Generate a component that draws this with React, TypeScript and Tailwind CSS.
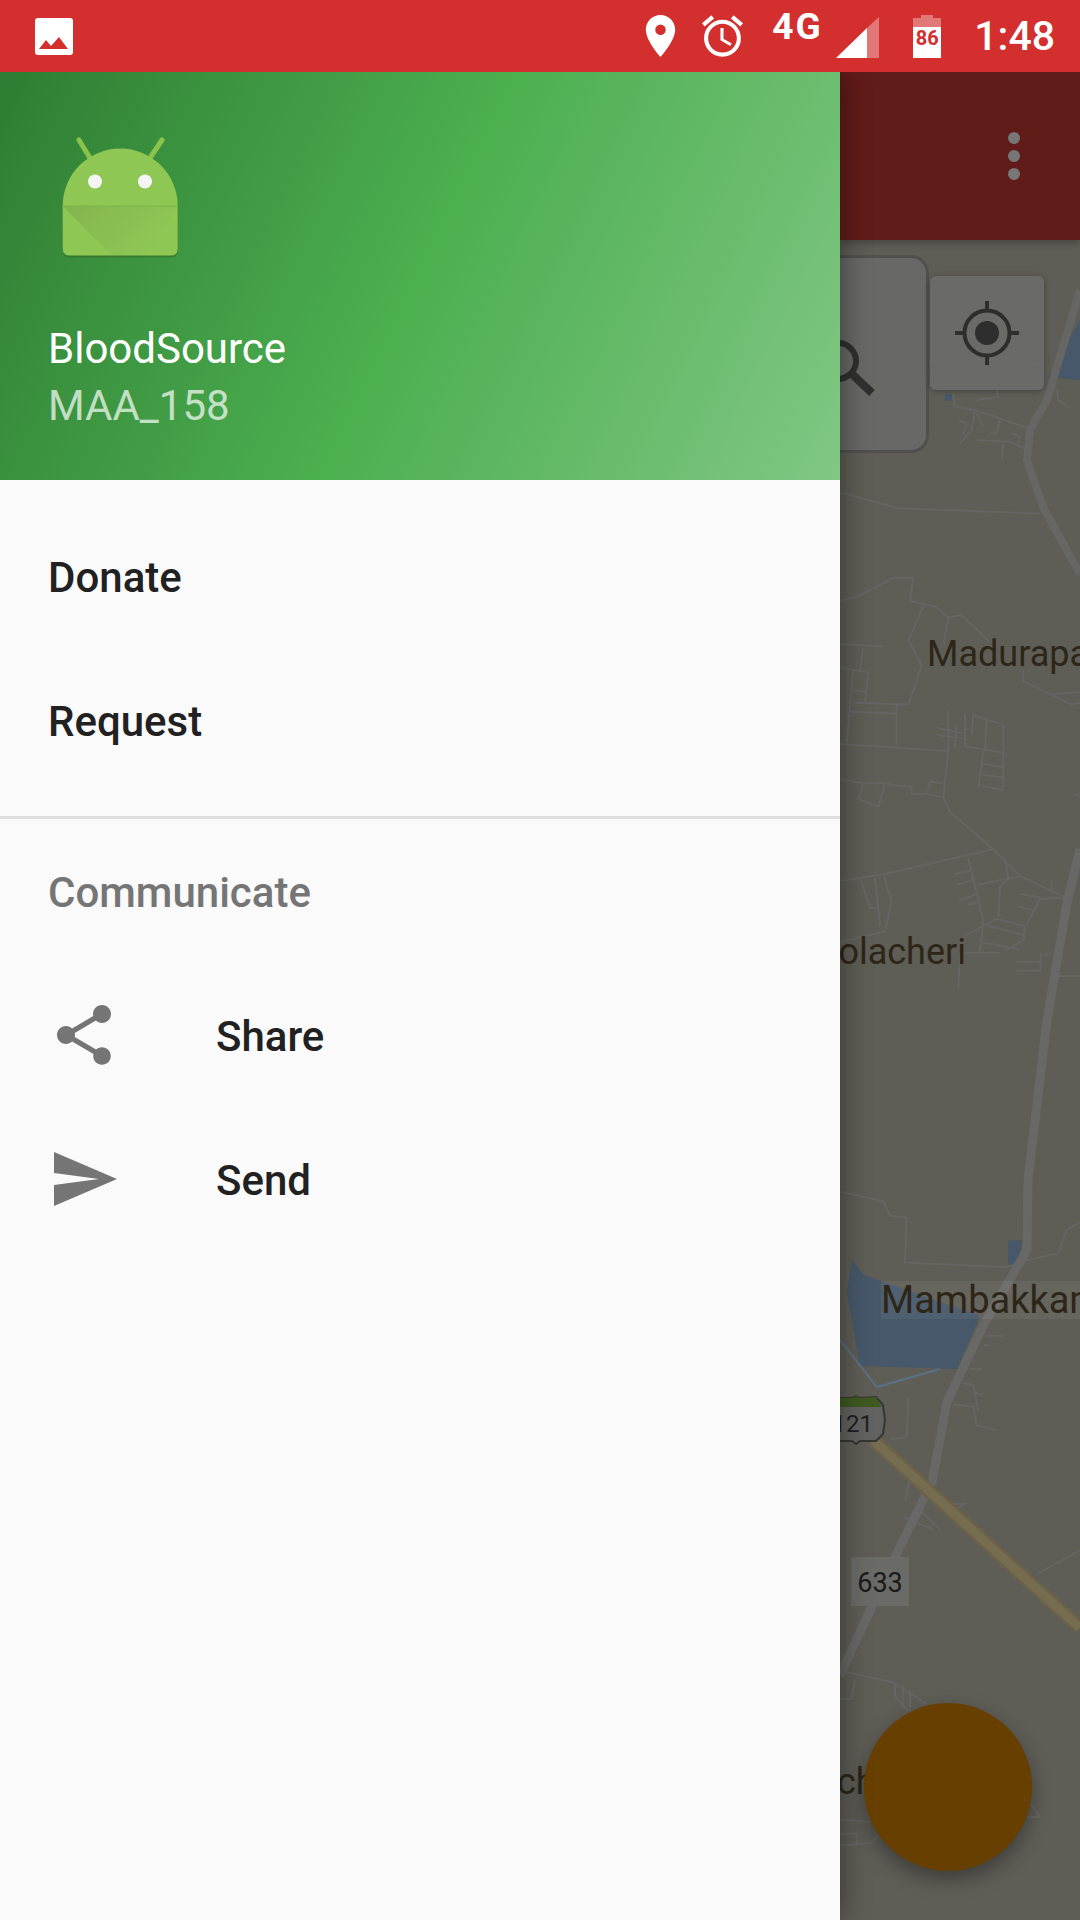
import type { ReactNode } from "react";

// map lines are traced from crops of the screen, so each group keeps its crop coordinates
const upperRoads = [
  "460,970 465,1010 525,1020 515,1080 480,1120",
  "525,1020 700,1080",
  "530,1030 550,1070",
  "475,1050 500,1060 490,1095",
  "590,960 595,980 530,990",
  "600,1050 590,1090 570,1090",
  "530,1110 630,1115 680,1140",
  "610,1120 605,1165",
  "635,1090 660,1100 655,1120",
  "750,950 770,960 775,990 805,1010",
  "240,920 350,880 450,870 530,920 620,890 730,880",
];

const middleRoads = [
  "60,90 235,135 660,150",
  "60,395 120,380 220,330 280,330 270,395 345,410 385,440 425,435 510,510",
  "310,410 265,505 305,575 265,685 100,680",
  "385,440 370,520",
  "60,515 190,522",
  "130,525 120,585",
  "60,580 145,595 135,680",
  "100,585 80,795",
  "100,645 140,650",
  "90,705 230,710",
  "230,685 230,800",
  "60,795 385,815",
  "385,815 370,945",
  "60,895 130,905 195,905 215,910 275,915 275,935 320,935 370,945",
  "130,905 115,950 175,970 195,905",
  "320,935 330,900 370,905",
  "370,945 390,985 520,1090 600,1165 735,1225",
  "520,1090 190,1160 60,1180",
  "190,1160 215,1235 195,1320 60,1350",
  "120,1170 150,1255 170,1255",
  "165,1170 180,1305",
  "445,1115 490,1290 480,1375",
  "555,1120 565,1170 540,1195 535,1280",
  "470,1190 600,1165",
  "400,1160 450,1150",
  "410,1190 460,1175",
  "415,1235 470,1215",
  "445,1245 480,1240",
  "430,1335 530,1285 615,1305 610,1345 550,1375",
  "490,1300 610,1330",
  "480,1350 600,1370",
  "430,1380 540,1380",
  "735,1225 660,1230 620,1300",
  "695,1180 695,1210",
  "600,1215 660,1225",
  "590,1250 640,1260",
  "590,1405 665,1405",
  "590,1430 665,1430",
  "690,1385 662,1385 662,1435",
  "705,1445 780,1445",
  "420,1380 415,1480",
  "350,750 430,765",
  "350,770 430,780",
  "385,700 385,815",
  "410,740 405,805",
  "435,710 435,805",
  "460,710 455,770",
  "460,715 545,740",
  "500,730 495,810",
  "430,800 550,820",
  "550,740 550,925",
  "490,815 475,920",
  "480,850 550,860",
  "480,880 550,890",
  "475,910 550,925",
  "610,590 610,620 755,685 780,680",
  "780,650 700,655",
  "760,935 780,940",
];

const lowerRoads = [
  "60,25 190,45 210,75 260,80 255,175 560,185",
  "560,185 620,170 715,155 740,105 780,90",
  "60,1040 220,1065 320,1110",
  "225,1065 225,1095 265,1125",
  "250,1070 250,1120",
  "270,1080 270,1125",
  "60,1100 95,1100 105,1060",
  "60,1355 155,1360",
  "60,1385 110,1385 110,1410",
  "60,1410 150,1405 185,1385",
  "630,1320 660,1350 620,1350",
  "500,330 550,330",
  "490,350 510,350",
  "450,400 485,400",
  "400,475 460,480 470,520 530,530",
  "430,430 460,435 475,490",
  "460,450 490,455",
  "210,550 260,545 265,460",
  "255,680 270,630",
  "250,715 340,740",
  "300,700 360,740",
  "380,710 440,685 350,690",
  "650,835 780,785",
];

function RoadGroup({
  transform,
  roads,
  width = 2,
  color = "#656563",
}: {
  transform: string;
  roads: string[];
  width?: number;
  color?: string;
}) {
  return (
    <g transform={transform} fill="none" stroke={color} strokeWidth={width} strokeLinejoin="round">
      {roads.map((points) => (
        <polyline key={points} points={points} vectorEffect="non-scaling-stroke" />
      ))}
    </g>
  );
}

function MapLines() {
  return (
    <svg className="absolute inset-0 h-full w-full" viewBox="840 240 240 1680">
      <polygon points="1080,320 1048,377 1080,380" fill="#46586a" />
      <rect x="945" y="394" width="7" height="7" fill="#46586a" />
      <polygon points="852,1260 864,1275 980,1316 957,1369 860,1366 847,1293" fill="#46586a" />
      <polygon points="1008,1241 1022,1240 1017,1268 1008,1264" fill="#46586a" />
      <polyline points="840,1340 877,1387 940,1369" fill="none" stroke="#5a7186" strokeWidth="2" />

      <RoadGroup transform="translate(800 70) scale(.3333)" roads={upperRoads} />
      <RoadGroup transform="translate(820 460) scale(.3333 .3571)" roads={middleRoads} />
      <RoadGroup transform="translate(820 1180) scale(.3333 .4719)" roads={lowerRoads} />

      <polyline
        points="1080,290 1047,400 1030,430 1027,460 1043,507 1080,574"
        fill="none"
        stroke="#666665"
        strokeWidth="8"
      />
      <polyline
        points="1080,849 1067,903 1047,1020 1028,1180 1027,1250 983,1326 947,1402 932,1482 897,1553 840,1675"
        fill="none"
        stroke="#686867"
        strokeWidth="9"
      />
      <line x1="873" y1="1440" x2="1080" y2="1628" stroke="#6b6249" strokeWidth="14" />
      <line x1="873" y1="1440" x2="1080" y2="1628" stroke="#766c50" strokeWidth="9" />

      <path
        d="M830 1398 L852 1398 L856 1396 L860 1398 L876 1397 L883 1405 L885 1420 L883 1434 L876 1441 L860 1441 L856 1444 L852 1441 L830 1441 Z"
        fill="#626260"
        stroke="#363635"
        strokeWidth="2"
      />
      <path d="M830 1398 L852 1398 L856 1396 L860 1398 L876 1397 L882 1407 L830 1407 Z" fill="#3f5a20" />
    </svg>
  );
}

function MapLabel({ className, children }: { className: string; children: ReactNode }) {
  return <span className={`absolute whitespace-nowrap leading-none ${className}`}>{children}</span>;
}

function AndroidLogo() {
  return (
    <svg width="144" height="144" viewBox="0 0 144 144">
      <defs>
        <linearGradient id="fold" x1="0" y1="0" x2="1" y2="0.4">
          <stop offset="0" stopColor="#000" stopOpacity=".09" />
          <stop offset="1" stopColor="#000" stopOpacity="0" />
        </linearGradient>
      </defs>
      <path
        d="M31 20 L42 38 M114 20 L102 38"
        stroke="#8bc34a"
        strokeWidth="5"
        strokeLinecap="round"
      />
      <path
        d="M14.7 90 L14.7 130.5 Q14.7 137.5 22 137.5 L122.5 137.5 Q129.7 137.5 129.7 130.5 L129.7 90 Z"
        fill="#33691e"
        fillOpacity=".55"
      />
      <path
        d="M14.7 86 A57.5 57.5 0 0 1 129.7 86 L129.7 128.5 Q129.7 135.6 122.5 135.6 L22 135.6 Q14.7 135.6 14.7 128.5 Z"
        fill="#8fc755"
      />
      <polygon points="14.7,86 129.7,86 100,135.6 64,135.6" fill="url(#fold)" />
      <line x1="14.7" y1="86" x2="129.7" y2="86" stroke="#7fb04b" strokeWidth="1" />
      <circle cx="47" cy="61.5" r="7" fill="#f5f5f5" />
      <circle cx="97" cy="61.5" r="7" fill="#f5f5f5" />
    </svg>
  );
}

function StatusBar() {
  return (
    <div className="relative z-20 flex h-[72px] shrink-0 items-center bg-[#d32f2f] pl-[35px] pr-[25px] text-white">
      <svg width="38" height="37" viewBox="0 0 38 37">
        <rect width="38" height="37" rx="3" fill="#fff" />
        <polygon points="4,31 11,22 16,28 24,19 33,31" fill="#d32f2f" />
      </svg>
      <svg className="ml-auto mr-[26px]" width="31" height="42" viewBox="5 2 14 20" fill="#fff">
        <path d="M12 2C8.13 2 5 5.13 5 9c0 5.25 7 13 7 13s7-7.75 7-13c0-3.87-3.13-7-7-7zm0 9.5a2.5 2.5 0 0 1 0-5 2.5 2.5 0 0 1 0 5z" />
      </svg>
      <svg className="mr-[29px]" width="41" height="42" viewBox="2 1.86 20 20.14" fill="#fff">
        <path d="M22 5.72l-4.6-3.86-1.29 1.53 4.6 3.86L22 5.72zM7.88 3.39L6.6 1.86 2 5.71l1.29 1.53 4.59-3.85zM12.5 8H11v6l4.75 2.85.75-1.23-4-2.37V8zM12 4c-4.97 0-9 4.03-9 9s4.02 9 9 9c4.97 0 9-4.03 9-9s-4.03-9-9-9zm0 16c-3.87 0-7-3.13-7-7s3.13-7 7-7 7 3.13 7 7-3.13 7-7 7z" />
      </svg>
      <span className="mr-[15px] mt-[8px] w-[49px] self-start whitespace-nowrap text-[37px] font-bold leading-none tracking-[2px]">
        4G
      </span>
      <svg className="mr-[34px] mt-[3px]" width="43" height="41" viewBox="0 0 43 41">
        <polygon points="0,41 31,11 31,41" fill="#fff" />
        <polygon points="31,11 43,0 43,41 31,41" fill="#fff" fillOpacity=".35" />
      </svg>
      <div className="relative mr-[33px] h-[43px] w-[28px]">
        <svg width="28" height="43" viewBox="0 0 28 43">
          <path d="M8 0H20V3H28V12H0V3H8Z" fill="#fff" fillOpacity=".35" />
          <rect y="12" width="28" height="31" fill="#fff" />
        </svg>
        <span className="absolute inset-x-0 top-[13px] text-center text-[20px] font-bold leading-[20px] text-[#d32f2f]">
          86
        </span>
      </div>
      <span className="text-[41px] font-medium leading-none">1:48</span>
    </div>
  );
}

function MenuItem({ icon, children }: { icon?: ReactNode; children: ReactNode }) {
  return (
    <div className={`flex h-[144px] items-center pl-[48px] text-[42px] font-medium text-[#212121] ${icon ? "" : "pt-[2px]"}`}>
      {icon && <span className="mr-[96px] flex h-[72px] w-[72px] -translate-y-px">{icon}</span>}
      {children}
    </div>
  );
}

function Drawer() {
  return (
    <aside className="relative z-10 flex w-[840px] shrink-0 flex-col bg-[#fafafa] shadow-[0_0_28px_rgba(0,0,0,0.45)]">
      <header className="flex h-[408px] flex-col bg-[linear-gradient(116deg,#2e7d32,#4caf50_50%,#81c784)] pb-[46px] pl-[48px] pt-[48px] text-[42px] leading-[57px] text-white">
        <AndroidLogo />
        <div className="mt-auto">BloodSource</div>
        <div className="text-white/70">MAA_158</div>
      </header>
      <nav className="border-b-[3px] border-[#dedede] py-[24px]">
        <MenuItem>Donate</MenuItem>
        <MenuItem>Request</MenuItem>
      </nav>
      <div className="flex h-[145px] items-center pl-[48px] pt-[2px] text-[42px] font-medium text-[#757575]">
        Communicate
      </div>
      <MenuItem
        icon={
          <svg viewBox="0 0 24 24" fill="#757575" className="h-full w-full">
            <path d="M18 16.08c-.76 0-1.44.3-1.96.77L8.91 12.7c.05-.23.09-.46.09-.7s-.04-.47-.09-.7l7.05-4.11c.54.5 1.25.81 2.04.81 1.66 0 3-1.34 3-3s-1.34-3-3-3-3 1.34-3 3c0 .24.04.47.09.7L8.04 9.81C7.5 9.31 6.79 9 6 9c-1.66 0-3 1.34-3 3s1.34 3 3 3c.79 0 1.5-.31 2.04-.81l7.12 4.16c-.05.21-.08.43-.08.65 0 1.61 1.31 2.92 2.92 2.92s2.92-1.31 2.92-2.92-1.31-2.92-2.92-2.92z" />
          </svg>
        }
      >
        Share
      </MenuItem>
      <MenuItem
        icon={
          <svg viewBox="0 0 24 24" fill="#757575" className="h-full w-full">
            <path d="M2.01 21L23 12 2.01 3 2 10l15 2-15 2z" />
          </svg>
        }
      >
        Send
      </MenuItem>
    </aside>
  );
}

function MapPanel() {
  return (
    <div className="flex min-w-0 flex-1 flex-col">
      <div className="relative z-[1] flex h-[168px] shrink-0 flex-col items-end gap-[6px] bg-[#611b18] pr-[60px] pt-[60px] shadow-[0_3px_8px_rgba(0,0,0,0.25)]">
        <span className="h-[12px] w-[12px] rounded-full bg-[#777777]" />
        <span className="h-[12px] w-[12px] rounded-full bg-[#777777]" />
        <span className="h-[12px] w-[12px] rounded-full bg-[#777777]" />
      </div>
      <div className="relative flex-1 overflow-hidden bg-[#5e5d56]">
        <MapLines />

        <MapLabel className="left-[87px] top-[396px] text-[36px] text-[#2e2618]">Madurapakkam</MapLabel>
        <MapLabel className="right-[114px] top-[694px] text-[36px] text-[#2e2618]">Kolacheri</MapLabel>
        <MapLabel className="left-[41px] top-[1041px] bg-white/5 text-[38px] text-[#2e2618]">Mambakkam</MapLabel>
        <MapLabel className="left-[-3px] top-[1524px] text-[36px] text-[#2e2618]">ch</MapLabel>
        <MapLabel className="right-[207px] top-[1172px] text-[24px] text-[#1f1f1f]">121</MapLabel>
        <div className="absolute left-[11px] top-[1317px] flex h-[49px] w-[58px] items-center justify-center bg-[#6a6a67] pt-[3px] text-[27px] text-[#1a1a1a]">
          633
        </div>

        <div className="absolute left-[-100px] top-[15px] h-[198px] w-[189px] rounded-[18px] border-[3px] border-[#50504f] bg-[#6a6a6a]/85">
          <svg className="absolute left-[70px] top-[73px]" width="70" height="90" viewBox="0 0 70 90" fill="none" stroke="#303030">
            <circle cx="25" cy="30" r="18" strokeWidth="6" />
            <line x1="40" y1="44" x2="59" y2="62" strokeWidth="8" />
          </svg>
        </div>
        <div className="absolute left-[90px] top-[36px] flex h-[114px] w-[114px] items-center justify-center rounded-md bg-[#6b6b6a]/90 shadow-[0_1px_6px_rgba(0,0,0,0.3)]">
          <svg width="64" height="64" viewBox="0 0 64 64" fill="none" stroke="#2e2e2e">
            <circle cx="32" cy="32" r="22.5" strokeWidth="4" />
            <circle cx="32" cy="32" r="12" fill="#2e2e2e" stroke="none" />
            <path d="M32 0V9M32 55V64M0 32H9M55 32H64" strokeWidth="4" />
          </svg>
        </div>

        <div className="absolute bottom-[49px] right-[48px] h-[168px] w-[168px] rounded-full bg-[#673f00] shadow-[0_8px_20px_rgba(0,0,0,0.35)]" />
      </div>
    </div>
  );
}

export default function App() {
  return (
    <div className="flex h-[1920px] w-[1080px] flex-col overflow-hidden bg-[#5e5d56] font-['Roboto',sans-serif]">
      <StatusBar />
      <div className="flex min-h-0 flex-1">
        <Drawer />
        <MapPanel />
      </div>
    </div>
  );
}
